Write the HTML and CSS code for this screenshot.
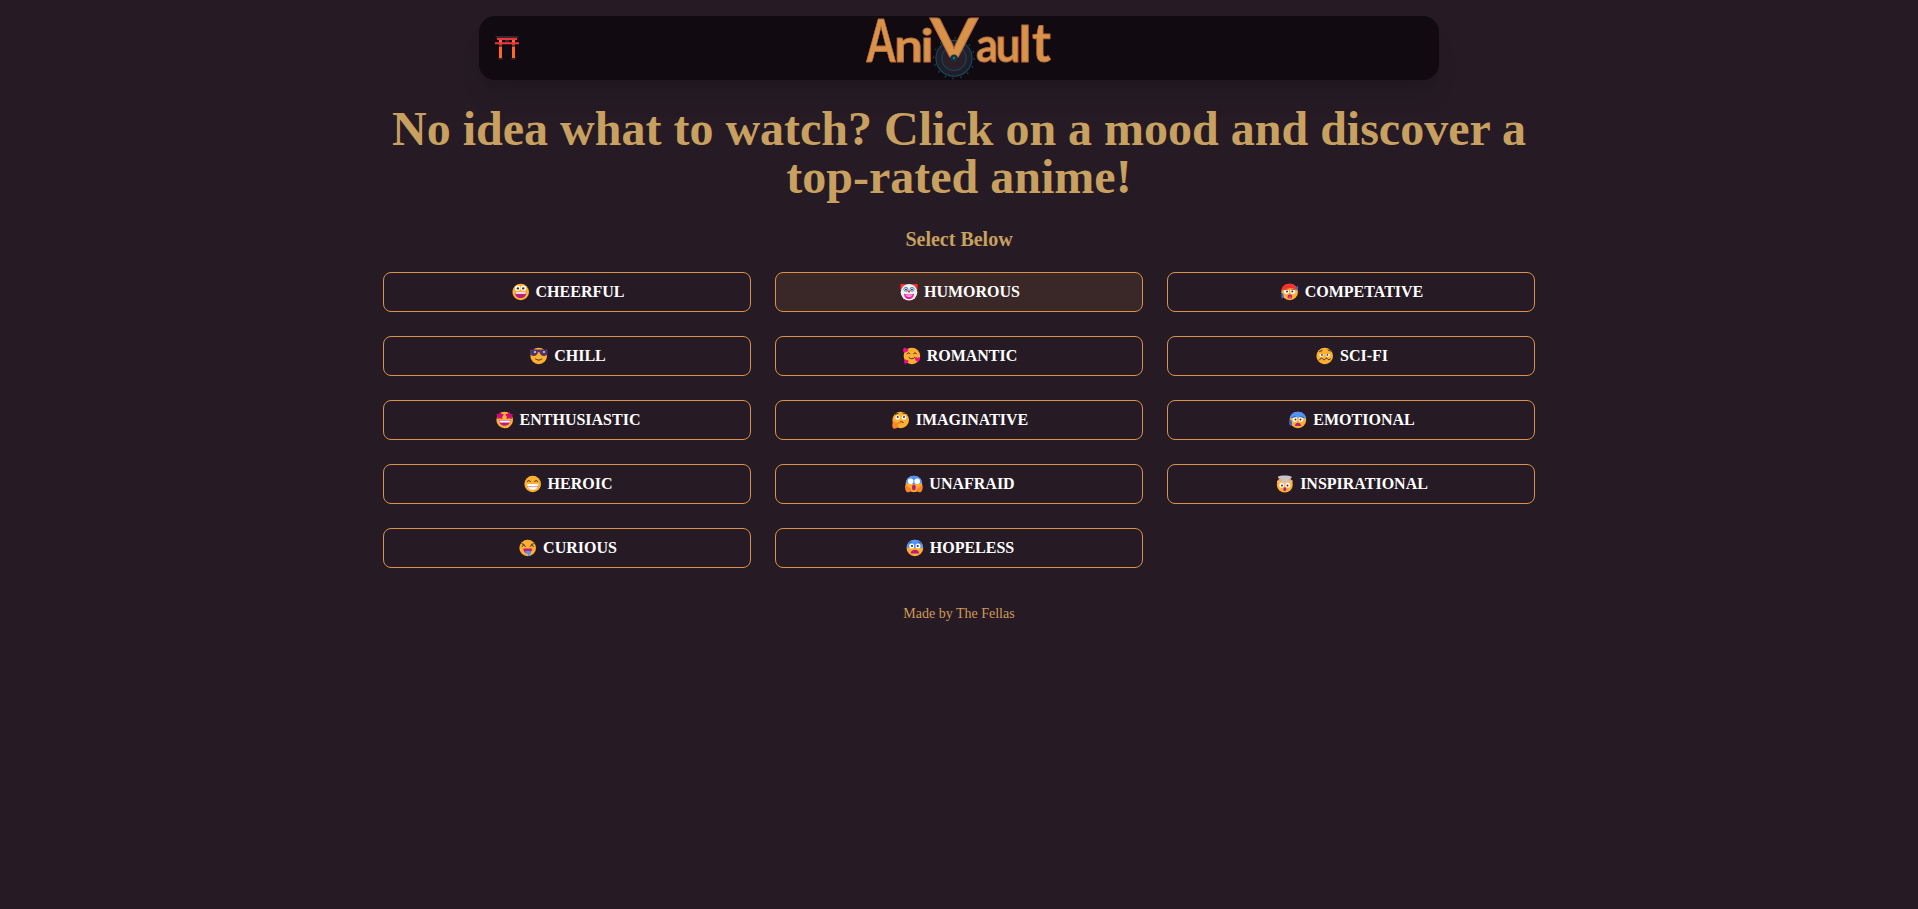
FILE: index.html
```html
<!DOCTYPE html>
<html lang="en">
<head>
<meta charset="utf-8">
<title>AniVault</title>
<link rel="stylesheet" href="styles.css">
</head>
<body>
<header class="navbar">
  <svg class="torii" viewBox="0 0 24 24" aria-hidden="true">
    <path d="M0 0h24l-2 2.600H2z" fill="#35292d"/>
    <path d="M10 3h4v4h-4z" fill="#35292d"/>
    <path d="M4 4h3v19H4zM17 4h3v19h-3z" fill="#ff6723"/>
    <path d="M4 8.500h3v2.300H4zM17 8.500h3v2.300h-3z" fill="#5a2a25"/>
    <path d="M2 2h20v2H2zM0 6.300h24v2H0z" fill="#f03440"/>
    <path d="M3.300 22h4.400v1.500H3.300zM16.300 22h4.400v1.500h-4.400z" fill="#35292d"/>
  </svg>
  <svg class="logo" viewBox="0 0 190 64" role="img" aria-label="AniVault">
    <g transform="translate(90 42.300)">
      <circle r="18" fill="#221e29" stroke="#14485a" stroke-width="1.200"/>
      <circle r="20.300" fill="none" stroke="#14485a" stroke-width="1.500" stroke-dasharray="1.500 6.472"/>
      <circle r="12.200" fill="#2a1f29" stroke="#14485a" stroke-width="1.100"/>
    </g>
    <text class="logo-text"><tspan x="2.500" y="45.500" font-size="60" textLength="29" lengthAdjust="spacingAndGlyphs">A</tspan><tspan x="30" y="45.500" font-size="46" textLength="29" lengthAdjust="spacingAndGlyphs">n</tspan><tspan x="56.500" y="45.500" font-size="45" textLength="13" lengthAdjust="spacingAndGlyphs">i</tspan><tspan x="66" y="41" font-size="54" textLength="48" lengthAdjust="spacingAndGlyphs">V</tspan><tspan x="112" y="45.500" font-size="47" textLength="22" lengthAdjust="spacingAndGlyphs">a</tspan><tspan x="131.500" y="45.500" font-size="47" textLength="25" lengthAdjust="spacingAndGlyphs">u</tspan><tspan x="154.500" y="45.500" font-size="50" textLength="13" lengthAdjust="spacingAndGlyphs">l</tspan><tspan x="168" y="45.500" font-size="54" textLength="19" lengthAdjust="spacingAndGlyphs">t</tspan></text>
    <circle cx="90" cy="42" r="3.600" fill="#17313d"/><circle cx="90" cy="42" r="1.300" fill="#2a7180"/>
  </svg>
</header>
<main class="content">
  <h1 class="title">No idea what to watch? Click on a mood and discover a top-rated anime!</h1>
  <h2 class="subtitle">Select Below</h2>
  <div class="moods">
    <button class="mood"><svg class="emoji" viewBox="0 0 22 18"><circle class="face" cx="10.700" cy="9" r="8.300"/><g fill="#fff"><circle cx="7.600" cy="5.300" r="2.700"/><circle cx="13.500" cy="5.300" r="2.700"/></g><circle cx="7.900" cy="5.400" r="1.200" fill="#402a32"/><circle cx="13.200" cy="5.400" r="1.200" fill="#402a32"/><path d="M5 9.200h11.200c0 3.500-2.200 5.900-5.600 5.900S5 12.700 5 9.200z" fill="#bb1d80"/><path d="M5.500 9.200h10.200v1.600H5.500z" fill="#fff"/></svg> CHEERFUL</button>
    <button class="mood mood-active"><svg class="emoji" viewBox="0 0 22 18"><path d="M2.500 1h5v6h-5zM14.500 1h5v6h-5z" fill="#f8312f"/><circle cx="11" cy="9.300" r="8.300" fill="#f4f0f4"/><circle cx="7.900" cy="6.300" r="2" fill="#fff" stroke="#2384c4" stroke-width=".9"/><circle cx="14.100" cy="6.300" r="2" fill="#fff" stroke="#2384c4" stroke-width=".9"/><circle cx="8" cy="6.500" r=".9" fill="#402a32"/><circle cx="14" cy="6.500" r=".9" fill="#402a32"/><circle cx="11" cy="8.400" r="1.200" fill="#f8312f"/><path d="M6 10.500c1.500 1.300 8.500 1.300 10 0 0 3.500-2 5.500-5 5.500s-5-2-5-5.500z" fill="#f71d9d"/><path d="M7.500 12.500h7c-1 1.500-6 1.500-7 0z" fill="#fff"/></svg> HUMOROUS</button>
    <button class="mood"><svg class="emoji" viewBox="0 0 22 18"><circle class="face" cx="10.700" cy="9" r="8.300"/><path d="M2.500 8C2.300 3.500 6 .7 10.500.7c3 0 5.500 1.500 7 3.800l-.8 2C13.500 4.500 7 4.700 2.500 8z" fill="#f8312f"/><path d="M19 2.200v4.500c-1 .8-2.500.1-2.500-1.200zM2.700 10c1.400 0 2 1 2 2.500s-.3 3-1.500 3-1-2-.5-5.500z" fill="#4662d5"/><circle cx="7.500" cy="8.500" r="2.500" fill="#fff"/><circle cx="13.800" cy="8.500" r="2.500" fill="#fff"/><circle cx="8" cy="8.500" r="1" fill="#402a32"/><circle cx="13.300" cy="8.500" r="1" fill="#402a32"/><path d="M5 6.800l4.500-.7M12 6.100l4.500.7" stroke="#c9512b" stroke-width="1"/><rect x="8.600" y="11.500" width="4.400" height="4" rx="1.500" fill="#bb1d80"/><rect x="9.500" y="13.500" width="2.600" height="2.800" rx="1" fill="#ff4b70"/></svg> COMPETATIVE</button>

    <button class="mood"><svg class="emoji" viewBox="0 0 22 18"><circle class="face" cx="10.700" cy="9" r="8.300"/><path d="M2 2.500h17.500v3c0 2-1.200 3.500-3.700 3.500-2.400 0-3.700-1.600-4.200-3.700h-1.700C9.500 7.400 8.200 9 5.800 9 3.200 9 2 7.500 2 5.500z" fill="#533566"/><circle cx="7" cy="5" r=".9" fill="#f2e5ff"/><circle cx="16" cy="5" r=".9" fill="#f2e5ff"/><path d="M7.500 12c1.700 1.500 4.700 1.500 6.400 0" class="line"/></svg> CHILL</button>
    <button class="mood"><svg class="emoji" viewBox="0 0 22 18"><circle class="face" cx="10.900" cy="9" r="8.300"/><path d="M6 6.600q1.500-2 3 0M12.500 6.600q1.500-2 3 0M7.900 10.500q3 2.900 5.800 0" class="line"/><path d="M2.500 1.500c1.300-1.200 2.400-.5 2.600.2C6.400 1 7.600 2 7.300 3.300 6.800 4.800 4.700 5.500 2.700 5.500c-.6-1.300-.9-3-.2-4z" fill="#f70a8d"/><path d="M14 10.800c1-.9 2-.4 2.400.3.600-1 2-1.200 2.600-.2.700 1.400-.8 3-2.500 4-1.500-.9-3.300-2.500-2.500-4.100zM3.500 13c1-.9 2-.4 2.300.2 1.200-.4 2 .6 1.600 1.600-.4 1.200-2 1.800-3.500 2-.7-1.100-1.200-2.700-.4-3.800z" fill="#f70a8d"/></svg> ROMANTIC</button>
    <button class="mood"><svg class="emoji" viewBox="0 0 22 18"><circle class="face" cx="10.700" cy="9" r="8.300"/><circle cx="7.600" cy="7.800" r="2.200" fill="#fff"/><circle cx="13.800" cy="7.800" r="2.200" fill="#fff"/><path d="M5 7h5.200V5H5zM11.300 7h5.200V5h-5.200z" class="face"/><circle cx="8" cy="7.900" r=".9" fill="#402a32"/><circle cx="13.400" cy="7.900" r=".9" fill="#402a32"/><path d="M5.600 4.500l2.500-1M14 3l2.500 1M5.500 13c1-2.200 2.400-2.200 3.300-1s1.800 1.200 2.500 0 1.600-1.200 2.400 0 1.600.9 2.600-.1" class="line"/></svg> SCI-FI</button>

    <button class="mood"><svg class="emoji" viewBox="0 0 22 18"><circle class="face" cx="10.700" cy="9" r="8.300"/><path d="M6.200.8l1.300 2 2.500.6-1.700 2 .1 2.600-2.500-.8-2.600.9V5.400L2.200 3.300l2.700-.6zM15.200.8l1.300 1.900 2.600.6-1.300 2.100v2.700l-2.600-.9-2.500.8.100-2.600-1.700-2 2.500-.6z" fill="#ca0b78"/><path d="M5 9h11.400c0 3.300-2.200 5.800-5.700 5.800S5 12.300 5 9z" fill="#bb1d80"/><path d="M5.500 9.500h10.400v2H5.500z" fill="#fff"/></svg> ENTHUSIASTIC</button>
    <button class="mood"><svg class="emoji" viewBox="0 0 22 18"><circle class="face" cx="10.700" cy="9" r="8.300"/><circle cx="7.600" cy="6.500" r="2.300" fill="#fff"/><circle cx="14" cy="6.500" r="2.300" fill="#fff"/><circle cx="7.700" cy="6" r="1" fill="#402a32"/><circle cx="14" cy="6" r="1" fill="#402a32"/><path d="M5.300 3.400l2.700-1M12.700 2l2.800.4M9.500 11.300q2-1.600 3.700 0" class="line"/><path d="M3 10.300c1.500-.3 1.600 1.400 3 1.700l3.500-.9c1 0 1.300 1 .4 1.500l-2 1c1 2.200-1 4.100-3.400 4.100-2.700 0-2.600-3.700-1.500-7.400z" fill="#ff822d"/></svg> IMAGINATIVE</button>
    <button class="mood"><svg class="emoji" viewBox="0 0 22 18"><circle class="face" cx="10.900" cy="9" r="8.300"/><path d="M2.600 8C2.900 3.500 6.500.7 10.900.7s8 2.800 8.300 7.300c-2.500-2-14-2-16.600 0z" fill="#5092ff"/><path d="M2.800 8.800c2 0 2.500 2 2.200 4-.2 2-1.500 2.500-2.400 1-.6-1-.6-3.500.2-5z" fill="#4662d5"/><circle cx="8" cy="8.500" r="2.400" fill="#fff"/><circle cx="14" cy="8.500" r="2.400" fill="#fff"/><circle cx="8.500" cy="8.600" r="1" fill="#402a32"/><circle cx="13.500" cy="8.600" r="1" fill="#402a32"/><path d="M5 6.500l4-1M13 5.500l4 1" stroke="#31659e"/><path d="M8 15c0-4.200 6-4.200 6 0z" fill="#bb1d80"/></svg> EMOTIONAL</button>

    <button class="mood"><svg class="emoji" viewBox="0 0 22 18"><circle class="face" cx="10.700" cy="9" r="8.300"/><path d="M5.200 6.400q1.600-2.100 3.300 0M12.500 6.400q1.600-2.100 3.300 0" class="line"/><path d="M5.200 9h11c0 3.600-2 5.800-5.500 5.800S5.200 12.600 5.200 9z" fill="#fff"/><path d="M5.400 11.700h10.600" stroke="#c45a93" stroke-width=".7"/></svg> HEROIC</button>
    <button class="mood"><svg class="emoji" viewBox="0 0 22 18"><circle class="face" cx="10.900" cy="9" r="8.300"/><path d="M2.700 8.300C3 3.500 6.500.7 10.900.7s8 2.800 8.300 7.600c-3 1-13 1-16.500 0z" fill="#5092ff"/><circle cx="7.600" cy="6.200" r="2.800" fill="#fff"/><circle cx="14.200" cy="6.200" r="2.800" fill="#fff"/><ellipse cx="10.900" cy="12.400" rx="1.900" ry="2.900" fill="#bb1d80"/><path d="M2 10.500c1.500-.8 2.300 0 3 1.200l3 2c1 2-1.500 3.800-3.500 3.600C2.500 17 2 13 2 10.500zM19.800 10.500c-1.500-.8-2.300 0-3 1.200l-3 2c-1 2 1.500 3.800 3.500 3.600 2-.3 2.500-4.300 2.500-6.800z" fill="#ff822d"/></svg> UNAFRAID</button>
    <button class="mood"><svg class="emoji" viewBox="0 0 22 18"><circle class="face" cx="10.800" cy="9.500" r="8"/><path d="M4 1.600C6 0 15 0 17.500 1.600c.7 2-1.500 2.500-3.200 2.500l.7 3H7.500V4C5.500 4 3.500 3.500 4 1.600z" fill="#c8c3cc"/><path d="M3 5.500l4 1.700h7.500L18.500 5v2.500c-5 1.500-10.500 1.500-15.500 0z" fill="#ffb98a"/><circle cx="7.700" cy="10.300" r="2.500" fill="#fff"/><circle cx="13.800" cy="10.300" r="2.500" fill="#fff"/><circle cx="8" cy="10.400" r="1" fill="#402a32"/><circle cx="13.500" cy="10.400" r="1" fill="#402a32"/><ellipse cx="10.800" cy="14.200" rx="1.500" ry="1.900" fill="#bb1d80"/></svg> INSPIRATIONAL</button>

    <button class="mood"><svg class="emoji" viewBox="0 0 22 18"><circle class="face" cx="10.700" cy="9" r="8.300"/><path d="M5 4.800l2 .6M5 7.200q1.600-2.100 3.500 0M16.500 4.800l-2 .6M13 7.200q1.600-2.100 3.500 0" class="line"/><path d="M6.300 9.500h8.800c0 3-1.700 4.700-4.400 4.700s-4.400-1.700-4.400-4.700z" fill="#bb1d80"/><path d="M8.500 12h5.200v3l-1 .3v1.500c-1.200.7-2 0-2-1V14.500H8.500z" fill="#5092ff"/></svg> CURIOUS</button>
    <button class="mood"><svg class="emoji" viewBox="0 0 22 18"><circle class="face" cx="10.900" cy="9" r="8.300"/><path d="M2.600 8.500C2.900 3.500 6.500.7 10.900.7s8 2.800 8.300 7.800c-3 .8-13.500.8-16.600 0z" fill="#5092ff"/><path d="M5 4.300l3-1.500M14 2.800l3 1.500" stroke="#31659e"/><circle cx="7.700" cy="7" r="2.500" fill="#fff"/><circle cx="14" cy="7" r="2.500" fill="#fff"/><circle cx="8" cy="7" r="1.100" fill="#402a32"/><circle cx="13.700" cy="7" r="1.100" fill="#402a32"/><path d="M6.600 14.500c.2-5 8.400-5 8.600 0z" fill="#bb1d80"/></svg> HOPELESS</button>
  </div>
</main>
<footer class="footer">Made by The Fellas</footer>
</body>
</html>
```
FILE: styles.css
```css
* { box-sizing: border-box; }

body {
  margin: 0;
  padding-top: 16px;
  background: #261b25;
  color: #c8a060;
  font-family: "Liberation Serif", "Times New Roman", serif;
}

.navbar {
  display: grid;
  grid-template-columns: 1fr 190px 1fr;
  align-items: center;
  width: 960px;
  height: 64px;
  margin: 0 auto;
  padding: 0 16px;
  border-radius: 16px;
  background: #110a10;
  box-shadow: 0 20px 25px -5px rgba(0, 0, 0, 0.1), 0 8px 10px -6px rgba(0, 0, 0, 0.1);
}

.torii { width: 24px; height: 24px; }

.logo { width: 190px; height: 64px; overflow: visible; }

.logo-text {
  font-family: Lato, "Liberation Sans", sans-serif;
  font-weight: 700;
  fill: #d9924a;
  stroke: #b86a3c;
  stroke-width: 0.8px;
}

.content {
  width: 1152px;
  margin: 25px auto 0;
  text-align: center;
}

.title {
  margin: 0;
  font-size: 48px;
  line-height: 48px;
  font-weight: 700;
}

.subtitle {
  margin: 24px 0 19px;
  font-size: 20px;
  line-height: 28px;
  font-weight: 700;
}

.moods {
  display: grid;
  grid-template-columns: repeat(3, 1fr);
  gap: 24px;
}

.mood {
  display: flex;
  align-items: center;
  justify-content: center;
  gap: 4px;
  height: 40px;
  padding: 0;
  border: 1px solid #d9924a;
  border-radius: 8px;
  background: transparent;
  color: #fff;
  font: 700 16px/24px "Liberation Serif", "Times New Roman", serif;
}

.mood-active { background: #3a2828; }

.emoji { width: 22px; height: 18px; }

.face { fill: #ffb02e; }

.line {
  fill: none;
  stroke: #402a32;
  stroke-width: 1;
  stroke-linecap: round;
}

.footer {
  margin-top: 36px;
  color: #d09a58;
  font-size: 14px;
  line-height: 20px;
  text-align: center;
}
```
